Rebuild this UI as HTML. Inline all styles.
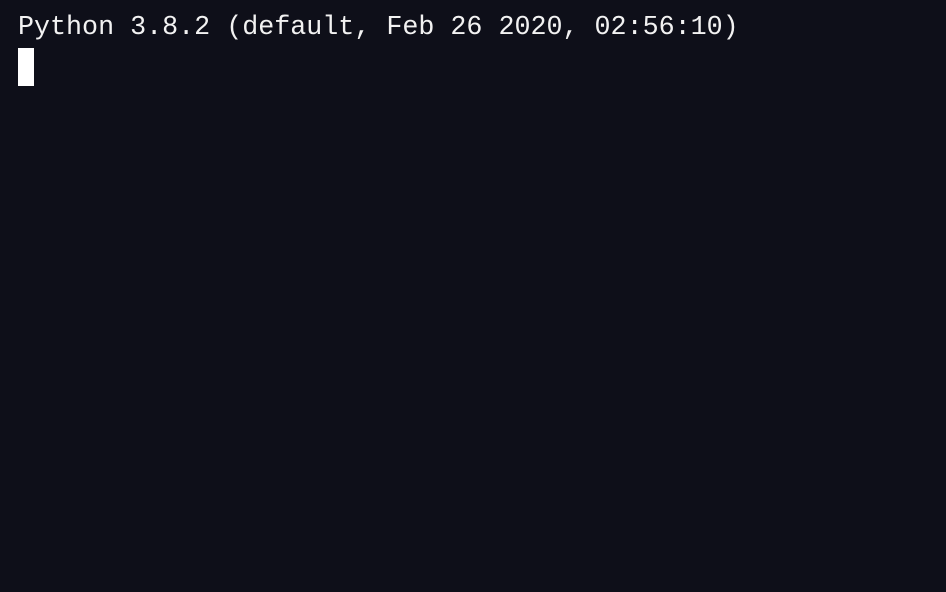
<!DOCTYPE html>
<html><head><meta charset="utf-8"><style>
html,body{margin:0;padding:0;width:946px;height:592px;background:#0e0f19;overflow:hidden}
.t{position:absolute;left:18px;top:11px;font-family:"Liberation Mono","DejaVu Sans Mono",monospace;font-size:26.7px;line-height:34px;color:#f2f2f2;white-space:pre}
.c{position:absolute;left:18px;top:48px;width:16px;height:38px;background:#fff}
</style></head><body>
<div class="t">Python 3.8.2 (default, Feb 26 2020, 02:56:10)</div>
<div class="c"></div>
</body></html>
